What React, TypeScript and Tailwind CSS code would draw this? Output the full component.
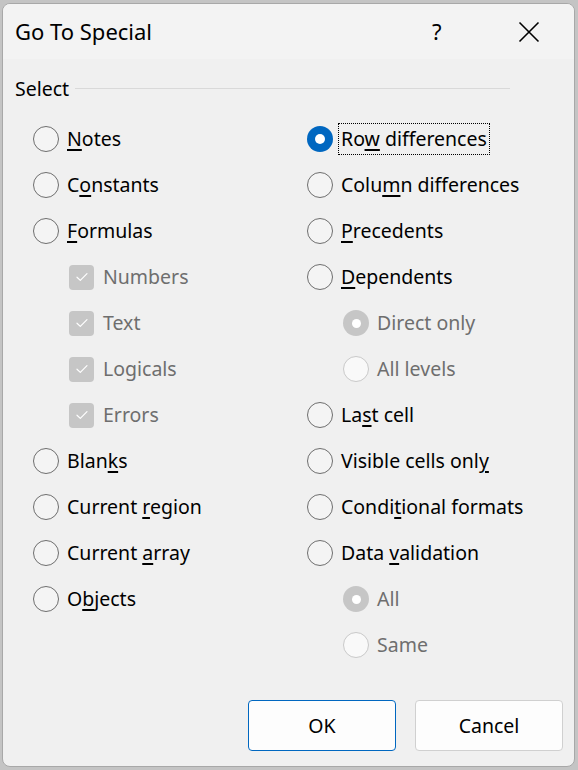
import React from 'react';

type Item = {
    label: React.ReactNode;
    kind: 'radio' | 'check';
    sub?: boolean;
    checked?: boolean;
    disabled?: boolean;
    focus?: boolean;
};

const U = ({ children }: { children: React.ReactNode }) => (
    <span className="underline decoration-2 underline-offset-[3px]">{children}</span>
);

function Radio({ checked, disabled }: { checked?: boolean; disabled?: boolean }) {
    if (checked && !disabled) {
        return (
            <div className="w-[26px] h-[26px] rounded-full bg-[#0067c0] flex items-center justify-center flex-shrink-0">
                <div className="w-[10px] h-[10px] rounded-full bg-white" />
            </div>
        );
    }
    if (checked && disabled) {
        return (
            <div className="w-[26px] h-[26px] rounded-full bg-[#c6c6c6] flex items-center justify-center flex-shrink-0">
                <div className="w-[9px] h-[9px] rounded-full bg-white" />
            </div>
        );
    }
    if (disabled) {
        return <div className="w-[26px] h-[26px] rounded-full border-[1.5px] border-[#c9c9c9] bg-[#f9f9f9] flex-shrink-0" />;
    }
    return <div className="w-[26px] h-[26px] rounded-full border-[1.5px] border-[#6e6e6e] bg-[#f4f4f4] flex-shrink-0" />;
}

function Check() {
    return (
        <div className="w-[25px] h-[25px] rounded-[4px] bg-[#c6c6c6] flex items-center justify-center flex-shrink-0">
            <svg width="16" height="16" viewBox="0 0 16 16" fill="none">
                <path d="M3 8.2 L6.3 11.4 L13 4.6" stroke="white" strokeWidth="1.2" strokeLinecap="round" strokeLinejoin="round" />
            </svg>
        </div>
    );
}

function Row({ item }: { item: Item }) {
    return (
        <div className={`h-[46px] flex items-center ${item.sub ? 'pl-[36px]' : ''}`}>
            {item.kind === 'check' ? <Check /> : <Radio checked={item.checked} disabled={item.disabled} />}
            {item.focus ? (
                <span className="ml-[5px] border border-dotted border-black px-[2px] py-[2px] leading-[26px] text-black">
                    {item.label}
                </span>
            ) : (
                <span className={`${item.kind === 'check' ? 'ml-[9px]' : 'ml-[8px]'} leading-[26px] ${item.disabled ? 'text-[#6e6e6e]' : 'text-black'}`}>
                    {item.label}
                </span>
            )}
        </div>
    );
}

const leftItems: Item[] = [
    { kind: 'radio', label: <><U>N</U>otes</> },
    { kind: 'radio', label: <>C<U>o</U>nstants</> },
    { kind: 'radio', label: <><U>F</U>ormulas</> },
    { kind: 'check', sub: true, disabled: true, label: 'Numbers' },
    { kind: 'check', sub: true, disabled: true, label: 'Text' },
    { kind: 'check', sub: true, disabled: true, label: 'Logicals' },
    { kind: 'check', sub: true, disabled: true, label: 'Errors' },
    { kind: 'radio', label: <>Blan<U>k</U>s</> },
    { kind: 'radio', label: <>Current <U>r</U>egion</> },
    { kind: 'radio', label: <>Current <U>a</U>rray</> },
    { kind: 'radio', label: <>O<U>b</U>jects</> },
];

const rightItems: Item[] = [
    { kind: 'radio', checked: true, focus: true, label: <>Ro<U>w</U> differences</> },
    { kind: 'radio', label: <>Colu<U>m</U>n differences</> },
    { kind: 'radio', label: <><U>P</U>recedents</> },
    { kind: 'radio', label: <><U>D</U>ependents</> },
    { kind: 'radio', sub: true, checked: true, disabled: true, label: 'Direct only' },
    { kind: 'radio', sub: true, disabled: true, label: 'All levels' },
    { kind: 'radio', label: <>La<U>s</U>t cell</> },
    { kind: 'radio', label: <>Visible cells onl<U>y</U></> },
    { kind: 'radio', label: <>Condi<U>t</U>ional formats</> },
    { kind: 'radio', label: <>Data <U>v</U>alidation</> },
    { kind: 'radio', sub: true, checked: true, disabled: true, label: 'All' },
    { kind: 'radio', sub: true, disabled: true, label: 'Same' },
];

export default function App() {
    return (
        <div className="w-[578px] h-[770px] bg-[#c4c4c4] pt-[3px] pl-[2px] pr-[3px] pb-[3px]"
            style={{ fontFamily: '"Noto Sans", "Open Sans", sans-serif' }}>
            <div className="w-full h-full rounded-[8px] border border-[#a8a8a8] bg-[#f0f0f0] overflow-hidden flex flex-col">
                {/* Title bar */}
                <div className="h-[55px] bg-[#f3f3f3] flex items-center pl-[12px] flex-shrink-0">
                    <span className="text-[22px] text-black flex-1">Go To Special</span>
                    <span className="text-[22px] text-black w-[12px] mr-[74px]">?</span>
                    <svg width="22" height="22" viewBox="0 0 22 22" className="mr-[34px]">
                        <path d="M1.5 1.5 L20.5 20.5 M20.5 1.5 L1.5 20.5" stroke="black" strokeWidth="1.6" />
                    </svg>
                </div>

                {/* Group header */}
                <div className="flex items-center pl-[12px] pr-[64px] h-[40px] mt-[10px]">
                    <span className="text-[19.5px] text-black">Select</span>
                    <div className="flex-1 h-px bg-[#d9d9d9] ml-[6px] -mt-[2px]" />
                </div>

                {/* Options */}
                <div className="grid grid-cols-[274px_1fr] pl-[30px] text-[19.5px] mt-[7px]">
                    <div>
                        {leftItems.map((it, i) => <Row key={i} item={it} />)}
                    </div>
                    <div>
                        {rightItems.map((it, i) => <Row key={i} item={it} />)}
                    </div>
                </div>

                {/* Buttons */}
                <div className="flex justify-end gap-[19px] pr-[11px] mt-auto mb-[15px]">
                    <button className="w-[148px] h-[51px] rounded-[4px] border border-[#0067c0] bg-[#fdfdfd] text-[19.5px] text-black">OK</button>
                    <button className="w-[148px] h-[51px] rounded-[4px] border border-[#d0d0d0] bg-[#fdfdfd] text-[19.5px] text-black">Cancel</button>
                </div>
            </div>
        </div>
    );
}
